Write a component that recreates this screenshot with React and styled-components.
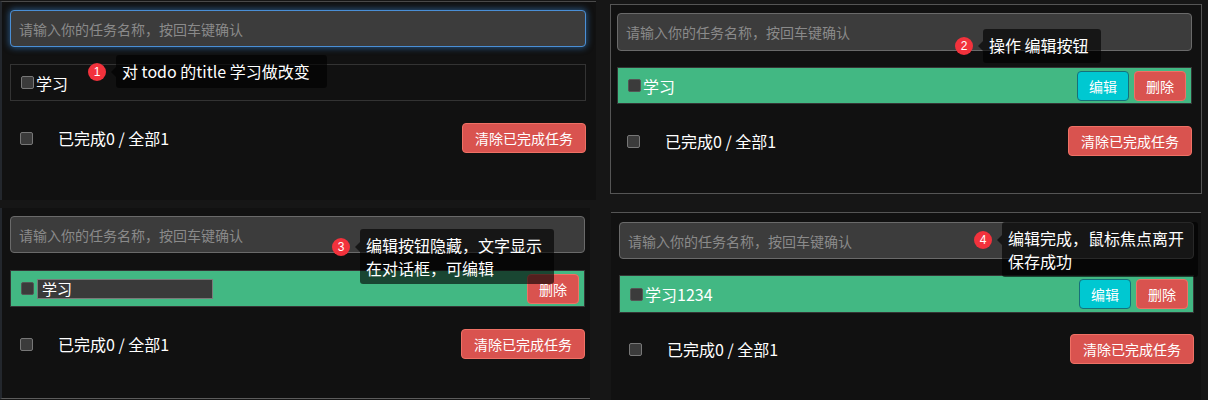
import React from "react";
import styled, { createGlobalStyle } from "styled-components";

const GlobalStyle = createGlobalStyle`
  html, body { margin: 0; padding: 0; background: #161616; }
  body { font-family: "Noto Sans CJK SC", "Noto Sans", sans-serif; }
`;

const Board = styled.div`
  width: 1208px;
  height: 400px;
  display: grid;
  grid-template-columns: 604px 604px;
  grid-template-rows: 200px 200px;
  background: #161616;
  overflow: hidden;
`;

const Cell = styled.div`
  position: relative;
  display: flex;
  flex-direction: column;
`;

const Shot = styled.div`
  box-sizing: border-box;
  margin: ${(p) => p.$margin};
  width: ${(p) => p.$width}px;
  height: ${(p) => p.$height}px;
  padding: ${(p) => p.$pad};
  background: #111111;
  border-style: solid;
  border-width: ${(p) => p.$borders};
  border-color: ${(p) => p.$edge};
  display: flex;
  flex-direction: column;
`;

const TaskInput = styled.input`
  box-sizing: border-box;
  width: 100%;
  height: ${(p) => p.$h}px;
  flex: none;
  margin: 0;
  padding: 0 8px;
  background: #3c3c3c;
  border: 1px solid ${(p) => (p.$focus ? "#4a8fd6" : "#6a6a6a")};
  border-radius: 4px;
  box-shadow: ${(p) => (p.$focus ? "0 0 6px 1px rgba(60,140,220,0.55)" : "none")};
  font-family: inherit;
  font-size: 14px;
  color: #ddd;
  outline: none;
  &::placeholder { color: #8a8a8a; }
`;

const TaskRow = styled.div`
  box-sizing: border-box;
  flex: none;
  height: ${(p) => p.$h}px;
  margin-top: ${(p) => p.$gap}px;
  display: flex;
  align-items: center;
  padding: 0 5px 0 10px;
  background: ${(p) => (p.$active ? "#42b883" : "transparent")};
  border: 1px solid ${(p) => (p.$active ? "#353535" : "#333")};
`;

const Check = styled.span`
  box-sizing: border-box;
  flex: none;
  width: 13px;
  height: 13px;
  background: #3b3b3b;
  border: 1px solid ${(p) => (p.$dim ? "#555" : "#777")};
  border-radius: 2px;
`;

const TaskTitle = styled.span`
  margin-left: 2px;
  font-size: 16px;
  line-height: 20px;
  color: #fff;
`;

const EditBox = styled.input`
  box-sizing: border-box;
  margin: 0 0 0 3px;
  width: 176px;
  height: 20px;
  padding: 0 4px;
  background: #3a3a3a;
  border: 1px solid #7a7a7a;
  font-family: inherit;
  font-size: 15px;
  color: #fff;
  outline: none;
`;

const Actions = styled.div`
  margin-left: auto;
  display: flex;
  gap: 5px;
`;

const Btn = styled.button`
  box-sizing: border-box;
  height: ${(p) => p.$h || 30}px;
  padding: 0 ${(p) => p.$px || 11}px;
  border-radius: 4px;
  font-family: inherit;
  font-size: 14px;
  color: #fff;
  background: ${(p) => (p.$kind === "edit" ? "#00c8d1" : "#d9534f")};
  border: 1px solid ${(p) => (p.$kind === "edit" ? "#16707a" : "#ef7165")};
  cursor: pointer;
`;

const Footer = styled.div`
  flex: none;
  height: 30px;
  margin-top: ${(p) => p.$gap}px;
  display: flex;
  align-items: center;
  padding-left: 10px;
`;

const Summary = styled.span`
  margin-left: 25px;
  font-size: 16px;
  line-height: 20px;
  color: #fff;
`;

const ClearBtn = styled(Btn)`
  margin-left: auto;
  padding: 0 12px;
`;

const Badge = styled.span`
  position: absolute;
  left: ${(p) => p.$x - 9}px;
  top: ${(p) => p.$y - 9}px;
  width: 18px;
  height: 18px;
  border-radius: 50%;
  background: #f2323c;
  color: #fff;
  font-size: 12px;
  line-height: 18px;
  text-align: center;
  font-family: "Liberation Sans", Arial, sans-serif;
`;

const Tip = styled.div`
  position: absolute;
  box-sizing: border-box;
  left: ${(p) => p.$x}px;
  top: ${(p) => p.$y}px;
  width: ${(p) => p.$w}px;
  height: ${(p) => p.$h}px;
  padding: 5px 6px;
  background: rgba(0, 0, 0, 0.62);
  border-radius: 3px;
  color: #fff;
  font-size: 16px;
  line-height: 23px;
  &::before {
    content: "";
    position: absolute;
    left: -5px;
    top: ${(p) => p.$arrow}px;
    border-style: solid;
    border-width: 5px 5px 5px 0;
    border-color: transparent rgba(0, 0, 0, 0.62) transparent transparent;
  }
`;

const Note = ({ n, bx, by, tx, ty, tw, th, arrow, children }) => (
  <>
    <Badge $x={bx} $y={by}>{n}</Badge>
    <Tip $x={tx} $y={ty} $w={tw} $h={th} $arrow={arrow}>{children}</Tip>
  </>
);

const Todo = ({ inputH, focus, rowGap, rowH, active, mode, title, footGap }) => (
  <>
    <TaskInput $h={inputH} $focus={focus} readOnly placeholder="请输入你的任务名称，按回车键确认" />
    <TaskRow $h={rowH} $gap={rowGap} $active={active}>
      <Check $dim={active} />
      {mode === "editing" ? <EditBox readOnly value={title} /> : <TaskTitle>{title}</TaskTitle>}
      {active && (
        <Actions>
          {mode !== "editing" && <Btn $kind="edit">编辑</Btn>}
          <Btn $kind="del">删除</Btn>
        </Actions>
      )}
    </TaskRow>
    <Footer $gap={footGap}>
      <Check />
      <Summary>已完成0 / 全部1</Summary>
      <ClearBtn $kind="del">清除已完成任务</ClearBtn>
    </Footer>
  </>
);

export default function App() {
  return (
    <Board>
      <GlobalStyle />
      <Cell>
        <Shot $margin="1px 0 0 0" $width={596} $height={199} $pad="8px 10px 0 8px"
          $borders="1px 0 0 2px" $edge="#4a4a4a #555 #555 #23272d">
          <Todo inputH={37} focus rowGap={17} rowH={37} title="学习" footGap={22} />
        </Shot>
        <Note n="1" bx={97} by={72} tx={116} ty={55} tw={211} th={33} arrow={12}>
          对 todo 的title 学习做改变
        </Note>
      </Cell>
      <Cell>
        <Shot $margin="4px 0 0 6px" $width={592} $height={190} $pad="8px 9px 0 6px"
          $borders="1px" $edge="#555">
          <Todo inputH={38} rowGap={16} rowH={37} active title="学习" footGap={22} />
        </Shot>
        <Note n="2" bx={360} by={46} tx={379} ty={29} tw={118} th={34} arrow={12}>
          操作 编辑按钮
        </Note>
      </Cell>
      <Cell>
        <Shot $margin="8px 0 0 0" $width={590} $height={191} $pad="8px 5px 0 8px"
          $borders="0 0 1px 2px" $edge="#555 #555 #5c5c5c #23272d">
          <Todo inputH={37} rowGap={17} rowH={37} active mode="editing" title="学习" footGap={22} />
        </Shot>
        <Note n="3" bx={341} by={47} tx={360} ty={29} tw={194} th={55} arrow={13}>
          编辑按钮隐藏，文字显示<br />在对话框，可编辑
        </Note>
      </Cell>
      <Cell>
        <Shot $margin="12px 0 0 7px" $width={590} $height={188} $pad="9px 7px 0 8px"
          $borders="1px 0 0 0" $edge="#555">
          <Todo inputH={37} rowGap={16} rowH={38} active title="学习1234" footGap={21} />
        </Shot>
        <Note n="4" bx={379} by={40} tx={398} ty={22} tw={196} th={55} arrow={13}>
          编辑完成，鼠标焦点离开<br />保存成功
        </Note>
      </Cell>
    </Board>
  );
}
